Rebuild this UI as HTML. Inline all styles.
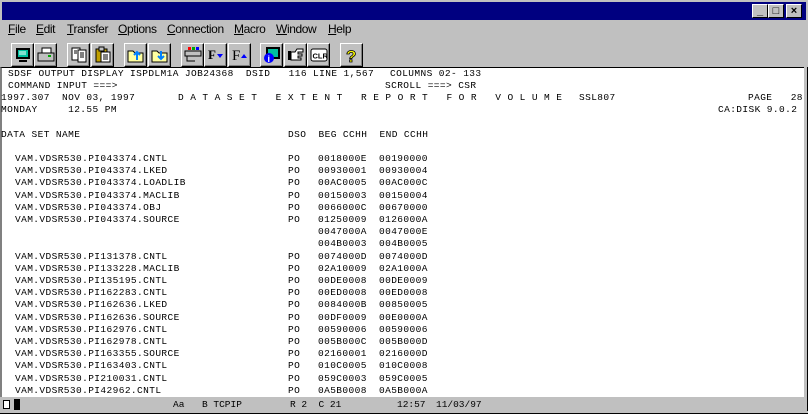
<!DOCTYPE html>
<html><head><meta charset="utf-8"><style>
*{margin:0;padding:0;box-sizing:border-box}
body{width:808px;height:414px;background:#c0c0c0;position:relative;overflow:hidden;font-family:"Liberation Sans",sans-serif}
.title{position:absolute;left:2px;top:2px;width:804px;height:18px;background:#000080}
.wb{position:absolute;top:4px;width:16px;height:14px;background:#c0c0c0;border:1px solid;border-color:#fff #000 #000 #fff;font:bold 11px "Liberation Sans",sans-serif;text-align:center;line-height:12px;color:#000}
.menu{position:absolute;top:22px;font-size:12px;letter-spacing:-0.4px;color:#000}
.menu u{text-decoration:underline}
.btn{position:absolute;top:43px;width:23px;height:24px;background:#c0c0c0;border:1px solid;border-color:#fff #000 #000 #fff;box-shadow:inset -1px -1px 0 #808080}
.btn svg{position:absolute;left:2px;top:2px}
.screen{position:absolute;left:0;top:67px;width:804px;height:330px;background:#fff;border-top:1px solid #000;border-left:2px solid #808080}
.t{position:absolute;font-family:"Liberation Mono",monospace;font-size:9.5px;letter-spacing:0.4px;line-height:12px;white-space:pre;color:#000}
.st{position:absolute;top:399px;font-family:"Liberation Mono",monospace;font-size:9.5px;white-space:pre;color:#000}
.rb{position:absolute;left:804px;top:67px;width:4px;height:347px;background:#c0c0c0;border-right:1px solid #000}
.bb{position:absolute;left:0;top:411px;width:808px;height:3px;background:#c0c0c0;border-bottom:1px solid #000}
</style></head><body>
<div class="title"></div>
<div class="wb" style="left:752px">_</div>
<div class="wb" style="left:768px">□</div>
<div class="wb" style="left:786px">×</div>

<div class="menu" style="left:8px"><u>F</u>ile</div>
<div class="menu" style="left:36px"><u>E</u>dit</div>
<div class="menu" style="left:67px"><u>T</u>ransfer</div>
<div class="menu" style="left:118px"><u>O</u>ptions</div>
<div class="menu" style="left:167px"><u>C</u>onnection</div>
<div class="menu" style="left:234px"><u>M</u>acro</div>
<div class="menu" style="left:276px"><u>W</u>indow</div>
<div class="menu" style="left:328px"><u>H</u>elp</div>

<div class="btn" style="left:11px"><svg width="18" height="18"><rect x="2" y="2" width="14" height="11" fill="#000"/><rect x="4" y="4" width="10" height="7" fill="#00c0a0"/><line x1="5" y1="6" x2="12" y2="6" stroke="#fff"/><line x1="5" y1="8" x2="12" y2="8" stroke="#fff"/><rect x="5" y="14" width="8" height="2" fill="#000"/></svg></div>
<div class="btn" style="left:34px"><svg width="18" height="18"><rect x="5" y="2" width="9" height="5" fill="#fff" stroke="#000"/><rect x="1" y="7" width="16" height="8" fill="#c0c0c0" stroke="#000"/><rect x="11" y="9" width="3" height="2" fill="#0a0"/></svg></div>
<div class="btn" style="left:67px"><svg width="18" height="18"><rect x="2" y="2" width="8" height="12" fill="#fff" stroke="#000"/><rect x="8" y="4" width="8" height="12" fill="#fff" stroke="#000"/><path d="M10 7h4M10 9h4M10 11h4M4 5h3M4 7h3" stroke="#000"/></svg></div>
<div class="btn" style="left:91px"><svg width="18" height="18"><rect x="2" y="3" width="11" height="13" fill="#c0a000" stroke="#000"/><rect x="5" y="1" width="5" height="4" fill="#c0c0c0" stroke="#000"/><rect x="7" y="6" width="9" height="10" fill="#fff" stroke="#000"/><path d="M9 9h5M9 11h5M9 13h5" stroke="#000"/></svg></div>
<div class="btn" style="left:124px"><svg width="18" height="18"><path d="M1 5h5l2 2h8v9H1z" fill="#ffffa0" stroke="#000"/><path d="M10 14V6M7 9l3-3 3 3" stroke="#0080ff" stroke-width="2" fill="none"/></svg></div>
<div class="btn" style="left:148px"><svg width="18" height="18"><path d="M1 5h5l2 2h8v9H1z" fill="#ffffa0" stroke="#000"/><path d="M10 5v8M7 10l3 3 3-3" stroke="#0080ff" stroke-width="2" fill="none"/></svg></div>
<div class="btn" style="left:181px"><svg width="18" height="18"><rect x="4" y="1" width="3" height="3" fill="#f00"/><rect x="8" y="1" width="3" height="3" fill="#0a0"/><rect x="12" y="1" width="3" height="3" fill="#00f"/><rect x="1" y="5" width="16" height="5" fill="#c0c0c0" stroke="#000"/><path d="M3 10v5h8" stroke="#000" fill="none"/></svg></div>
<div class="btn" style="left:204px"><svg width="18" height="18"><text x="1" y="13" font-family="Liberation Serif" font-size="13" font-weight="bold">F</text><path d="M10 8h6l-3 4z" fill="#00f"/></svg></div>
<div class="btn" style="left:228px"><svg width="18" height="18"><text x="1" y="14" font-family="Liberation Serif" font-size="15">F</text><path d="M10 12h6l-3-4z" fill="#00f"/></svg></div>
<div class="btn" style="left:260px"><svg width="18" height="18"><rect x="3" y="1" width="14" height="12" fill="#000"/><rect x="5" y="3" width="10" height="8" fill="#00c0a0"/><circle cx="6" cy="12" r="5" fill="#00f"/><text x="4.5" y="16" fill="#fff" font-size="9" font-weight="bold" font-family="Liberation Sans">i</text></svg></div>
<div class="btn" style="left:284px"><svg width="18" height="18"><rect x="1" y="5" width="3" height="9" fill="#000"/><path d="M4 6h4l2-3h6v3h-5v2h4v2h-4v2h3v2H4z" fill="#fff" stroke="#000"/></svg></div>
<div class="btn" style="left:307px"><svg width="18" height="18"><rect x="1" y="3" width="16" height="12" rx="2" fill="#fff" stroke="#000"/><text x="2.5" y="12.5" font-size="7.5" font-family="Liberation Sans" font-weight="bold">CLR</text></svg></div>
<div class="btn" style="left:340px"><svg width="18" height="18"><text x="3" y="16" font-size="17" font-weight="bold" fill="#ff0" stroke="#000" stroke-width="0.8" font-family="Liberation Sans">?</text></svg></div>

<div class="screen"></div>
<div class="rb"></div>

<div class="t" style="left:8px;top:68px">SDSF OUTPUT DISPLAY ISPDLM1A JOB24368  DSID   116 LINE 1,567</div>
<div class="t" style="left:390px;top:68px">COLUMNS 02- 133</div>
<div class="t" style="left:8px;top:80px">COMMAND INPUT ===&gt;</div>
<div class="t" style="left:385px;top:80px">SCROLL ===&gt; CSR</div>
<div class="t" style="left:1px;top:92px">1997.307  NOV 03, 1997</div>
<div class="t" style="left:178px;top:92px">D A T A S E T   E X T E N T   R E P O R T   F O R   V O L U M E</div>
<div class="t" style="left:579px;top:92px">SSL807</div>
<div class="t" style="left:748px;top:92px">PAGE   28</div>
<div class="t" style="left:1px;top:104px">MONDAY     12.55 PM</div>
<div class="t" style="left:718px;top:104px">CA:DISK 9.0.2</div>
<div class="t" style="left:1px;top:129px">DATA SET NAME</div>
<div class="t" style="left:288px;top:129px">DSO  BEG CCHH  END CCHH</div>

<div class="t" style="left:15px;top:153px;line-height:12.2px">VAM.VDSR530.PI043374.CNTL
VAM.VDSR530.PI043374.LKED
VAM.VDSR530.PI043374.LOADLIB
VAM.VDSR530.PI043374.MACLIB
VAM.VDSR530.PI043374.OBJ
VAM.VDSR530.PI043374.SOURCE


VAM.VDSR530.PI131378.CNTL
VAM.VDSR530.PI133228.MACLIB
VAM.VDSR530.PI135195.CNTL
VAM.VDSR530.PI162283.CNTL
VAM.VDSR530.PI162636.LKED
VAM.VDSR530.PI162636.SOURCE
VAM.VDSR530.PI162976.CNTL
VAM.VDSR530.PI162978.CNTL
VAM.VDSR530.PI163355.SOURCE
VAM.VDSR530.PI163403.CNTL
VAM.VDSR530.PI210031.CNTL
VAM.VDSR530.PI42962.CNTL</div>
<div class="t" style="left:288px;top:153px;line-height:12.2px">PO
PO
PO
PO
PO
PO


PO
PO
PO
PO
PO
PO
PO
PO
PO
PO
PO
PO</div>
<div class="t" style="left:318px;top:153px;line-height:12.2px">0018000E  00190000
00930001  00930004
00AC0005  00AC000C
00150003  00150004
0066000C  00670000
01250009  0126000A
0047000A  0047000E
004B0003  004B0005
0074000D  0074000D
02A10009  02A1000A
00DE0008  00DE0009
00ED0008  00ED0008
0084000B  00850005
00DF0009  00E0000A
00590006  00590006
005B000C  005B000D
02160001  0216000D
010C0005  010C0008
059C0003  059C0005
0A5B0008  0A5B000A</div>

<div style="position:absolute;left:3px;top:400px;width:7px;height:9px;border:1px solid #000;background:#fff"></div>
<div style="position:absolute;left:14px;top:399px;width:6px;height:11px;background:#000"></div>
<div class="st" style="left:173px">Aa</div>
<div class="st" style="left:202px">B TCPIP</div>
<div class="st" style="left:290px">R 2  C 21</div>
<div class="st" style="left:397px">12:57</div>
<div class="st" style="left:436px">11/03/97</div>
<div class="bb"></div>
</body></html>
